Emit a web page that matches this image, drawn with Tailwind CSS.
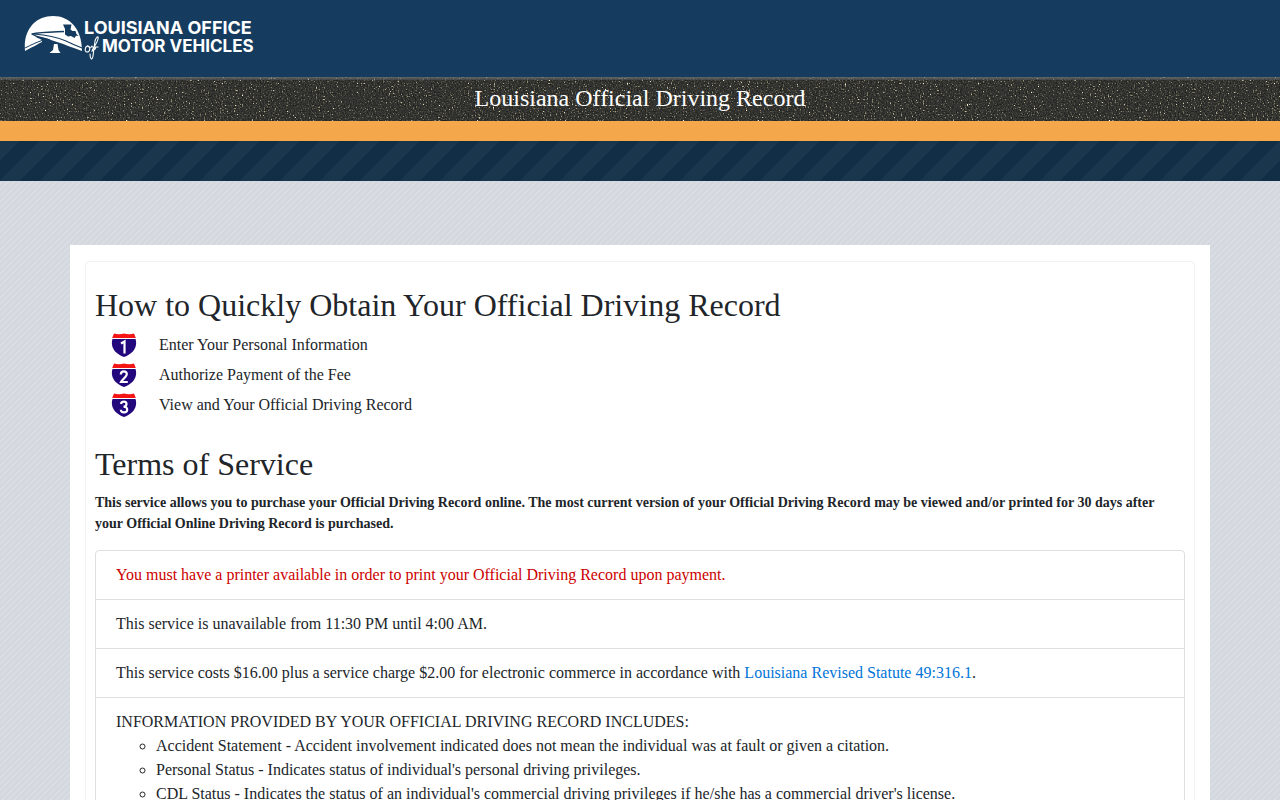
<!DOCTYPE html>
<html lang="en">
<head>
<meta charset="utf-8">
<meta name="viewport" content="width=device-width, initial-scale=1">
<title>Louisiana Official Driving Record</title>
<script src="https://cdn.jsdelivr.net/npm/@tailwindcss/browser@4"></script>
</head>
<body class="min-h-screen overflow-x-hidden bg-[#d6dae0] bg-[linear-gradient(135deg,#d3d8de_25%,#d9dde3_25%,#d9dde3_50%,#d3d8de_50%,#d3d8de_75%,#d9dde3_75%)] bg-[length:6px_6px] font-['Liberation_Serif',serif] text-base text-[#212529]">
<header>
  <div class="flex h-[77px] items-center bg-[#153c5f] px-6 pb-[3px]">
    <a href="#" aria-label="Louisiana Office of Motor Vehicles" class="flex items-center text-white">
      <svg class="h-[50px] w-[60px] shrink-0" viewBox="0 0 60 50" aria-hidden="true">
        <path fill="#fff" d="M1 39C-1 17 12 4 29 4S58 17 58 39C49 36 40 32 33 30C25 27 17 25 11 24C14 27 19 27 18 30C14 32 7 36 1 39Z"/>
        <path fill="none" stroke="#153c5f" stroke-width="1.3" stroke-linejoin="round" d="M40 19.5C28 20 16 20 8 22C12 25 20 26 26 28"/>
        <path fill="none" stroke="#153c5f" stroke-width="1.1" d="M10 22C24 23 35 26 42 29C48 32 53 34 58 36"/>
        <path fill="none" stroke="#153c5f" stroke-width="1" d="M1 36C7 33 13 30 18 28.5"/>
        <path fill="#153c5f" d="M39 12.5H47.5L46.5 17.5L48.5 19H51.5L52.5 22L54.5 24L52 23.8L50.5 26L47 24L44 24.5L41 22.5V17Z"/>
        <path fill="#fff" d="M30 32H33.5L34.5 38L36.5 41H25.5L29 38Z"/>
      </svg>
      <span class="flex flex-col font-['Inter',sans-serif] leading-[18px] font-bold whitespace-nowrap">
        <span class="text-[18px]">LOUISIANA OFFICE</span>
        <span class="flex text-[17px]">
          <svg class="h-[18px] w-[18px] shrink-0 overflow-visible" viewBox="0 0 18 18" role="img" aria-label="of" fill="none" stroke="#fff" stroke-width="1.1" stroke-linecap="round"><path d="M4 9C1 9 0 15 3 15C6 15 7 10 4 9C5 11 7 11 8 9M6 17C6 22 8 24 9 19L11 4C12 0 15-2 14 2C13 7 8 12 8 14C10 13 13 11 11 10M8 10H14"/></svg>
          <span>MOTOR VEHICLES</span>
        </span>
      </span>
    </a>
  </div>
  <div class="relative h-11 overflow-hidden bg-[#32312f]">
    <svg class="absolute inset-0 h-full w-full" aria-hidden="true">
      <filter id="asphalt" x="0" y="0" width="100%" height="100%" color-interpolation-filters="sRGB">
        <feTurbulence type="fractalNoise" baseFrequency="0.73 0.67" numOctaves="2" seed="23"/>
        <feColorMatrix values=".8 .8 .6 0 -.64  .8 .8 .6 0 -.64  .8 .8 .6 0 -.64  0 0 0 0 1"/>
        <feComponentTransfer>
          <feFuncR type="table" tableValues=".11 .13 .15 .18 .21 .25 .42 .68 1"/>
          <feFuncG type="table" tableValues=".11 .13 .15 .18 .21 .25 .41 .66 .96"/>
          <feFuncB type="table" tableValues=".11 .13 .14 .17 .20 .23 .34 .55 .84"/>
        </feComponentTransfer>
      </filter>
      <rect width="100%" height="100%" filter="url(#asphalt)"/>
    </svg>
    <div class="absolute inset-x-0 top-0 h-[3px] bg-linear-to-b from-[#6b7275]/80 to-[#6b7275]/30"></div>
    <h1 class="relative pt-[7px] text-center text-2xl leading-7 text-white">Louisiana Official Driving Record</h1>
  </div>
  <div class="h-5 bg-[#f4a84b]"></div>
  <div class="h-10 bg-[linear-gradient(135deg,#1a364d_25%,#122e47_25%,#122e47_50%,#1a364d_50%,#1a364d_75%,#122e47_75%)] bg-[length:40px_40px]"></div>
</header>
<main class="mx-auto mt-16 max-w-[1140px] bg-white px-[15px] py-4">
  <div class="rounded border border-[#f2f2f3] px-[9px] pt-6 pb-5">
    <h2 class="text-[32px] leading-[38px]" id="steps">How to Quickly Obtain Your Official Driving Record</h2>
    <ol class="mt-[9px] flex flex-col gap-[6px] pl-4" aria-labelledby="steps">
      <li class="flex h-6 items-center gap-[22px]">
        <svg class="h-[26px] w-[26px] shrink-0" viewBox="0 0 26 26" aria-hidden="true"><path fill="#23087d" d="M1.5 7H24.5C27 15 22 22 13 25C4 22-1 15 1.5 7Z"/><path fill="#f51414" d="M3 1.5C6 2.5 10 2.5 13 1.5C16 2.5 20 2.5 23 1.5L24.8 6H1.2Z"/><path stroke="#fff" stroke-width=".8" d="M1 6.5H25"/><path fill="none" stroke="#fff" stroke-width="2.2" d="M10 11.5L13.5 9.5V21.5"/></svg>
        <span>Enter Your Personal Information</span>
      </li>
      <li class="flex h-6 items-center gap-[22px]">
        <svg class="h-[26px] w-[26px] shrink-0" viewBox="0 0 26 26" aria-hidden="true"><path fill="#23087d" d="M1.5 7H24.5C27 15 22 22 13 25C4 22-1 15 1.5 7Z"/><path fill="#f51414" d="M3 1.5C6 2.5 10 2.5 13 1.5C16 2.5 20 2.5 23 1.5L24.8 6H1.2Z"/><path stroke="#fff" stroke-width=".8" d="M1 6.5H25"/><path fill="none" stroke="#fff" stroke-width="2.2" d="M9.8 12.5C10 8.3 16 8.7 15.8 12.2C15.6 15 11 17.5 10 20H16.8"/></svg>
        <span>Authorize Payment of the Fee</span>
      </li>
      <li class="flex h-6 items-center gap-[22px]">
        <svg class="h-[26px] w-[26px] shrink-0" viewBox="0 0 26 26" aria-hidden="true"><path fill="#23087d" d="M1.5 7H24.5C27 15 22 22 13 25C4 22-1 15 1.5 7Z"/><path fill="#f51414" d="M3 1.5C6 2.5 10 2.5 13 1.5C16 2.5 20 2.5 23 1.5L24.8 6H1.2Z"/><path stroke="#fff" stroke-width=".8" d="M1 6.5H25"/><path fill="none" stroke="#fff" stroke-width="2.2" d="M10 12C10.5 8.8 15.5 8.8 15.5 12C15.5 14 14 14.6 12.5 14.6C14.5 14.6 16.3 15.5 16.2 17.7C16 21.4 10 21.3 9.8 17.8"/></svg>
        <span>View and Your Official Driving Record</span>
      </li>
    </ol>
    <h2 class="mt-7 text-[32px] leading-[38px]">Terms of Service</h2>
    <p class="mt-[9px] text-sm leading-[21px] font-bold">This service allows you to purchase your Official Driving Record online. The most current version of your Official Driving Record may be viewed and/or printed for 30 days after your Official Online Driving Record is purchased.</p>
    <ul class="mt-4 divide-y divide-[#dfdfdf] rounded border border-[#dfdfdf]">
      <li class="px-5 py-3 text-[#cc0000]">You must have a printer available in order to print your Official Driving Record upon payment.</li>
      <li class="px-5 py-3">This service is unavailable from 11:30 PM until 4:00 AM.</li>
      <li class="px-5 py-3">This service costs $16.00 plus a service charge $2.00 for electronic commerce in accordance with <a href="#" class="text-[#0275d8]">Louisiana Revised Statute 49:316.1</a>.</li>
      <li class="px-5 py-3">INFORMATION PROVIDED BY YOUR OFFICIAL DRIVING RECORD INCLUDES:
        <ul class="list-[circle] pl-10">
          <li>Accident Statement - Accident involvement indicated does not mean the individual was at fault or given a citation.</li>
          <li>Personal Status - Indicates status of individual's personal driving privileges.</li>
          <li>CDL Status - Indicates the status of an individual's commercial driving privileges if he/she has a commercial driver's license.</li>
        </ul>
      </li>
    </ul>
  </div>
</main>
</body>
</html>
